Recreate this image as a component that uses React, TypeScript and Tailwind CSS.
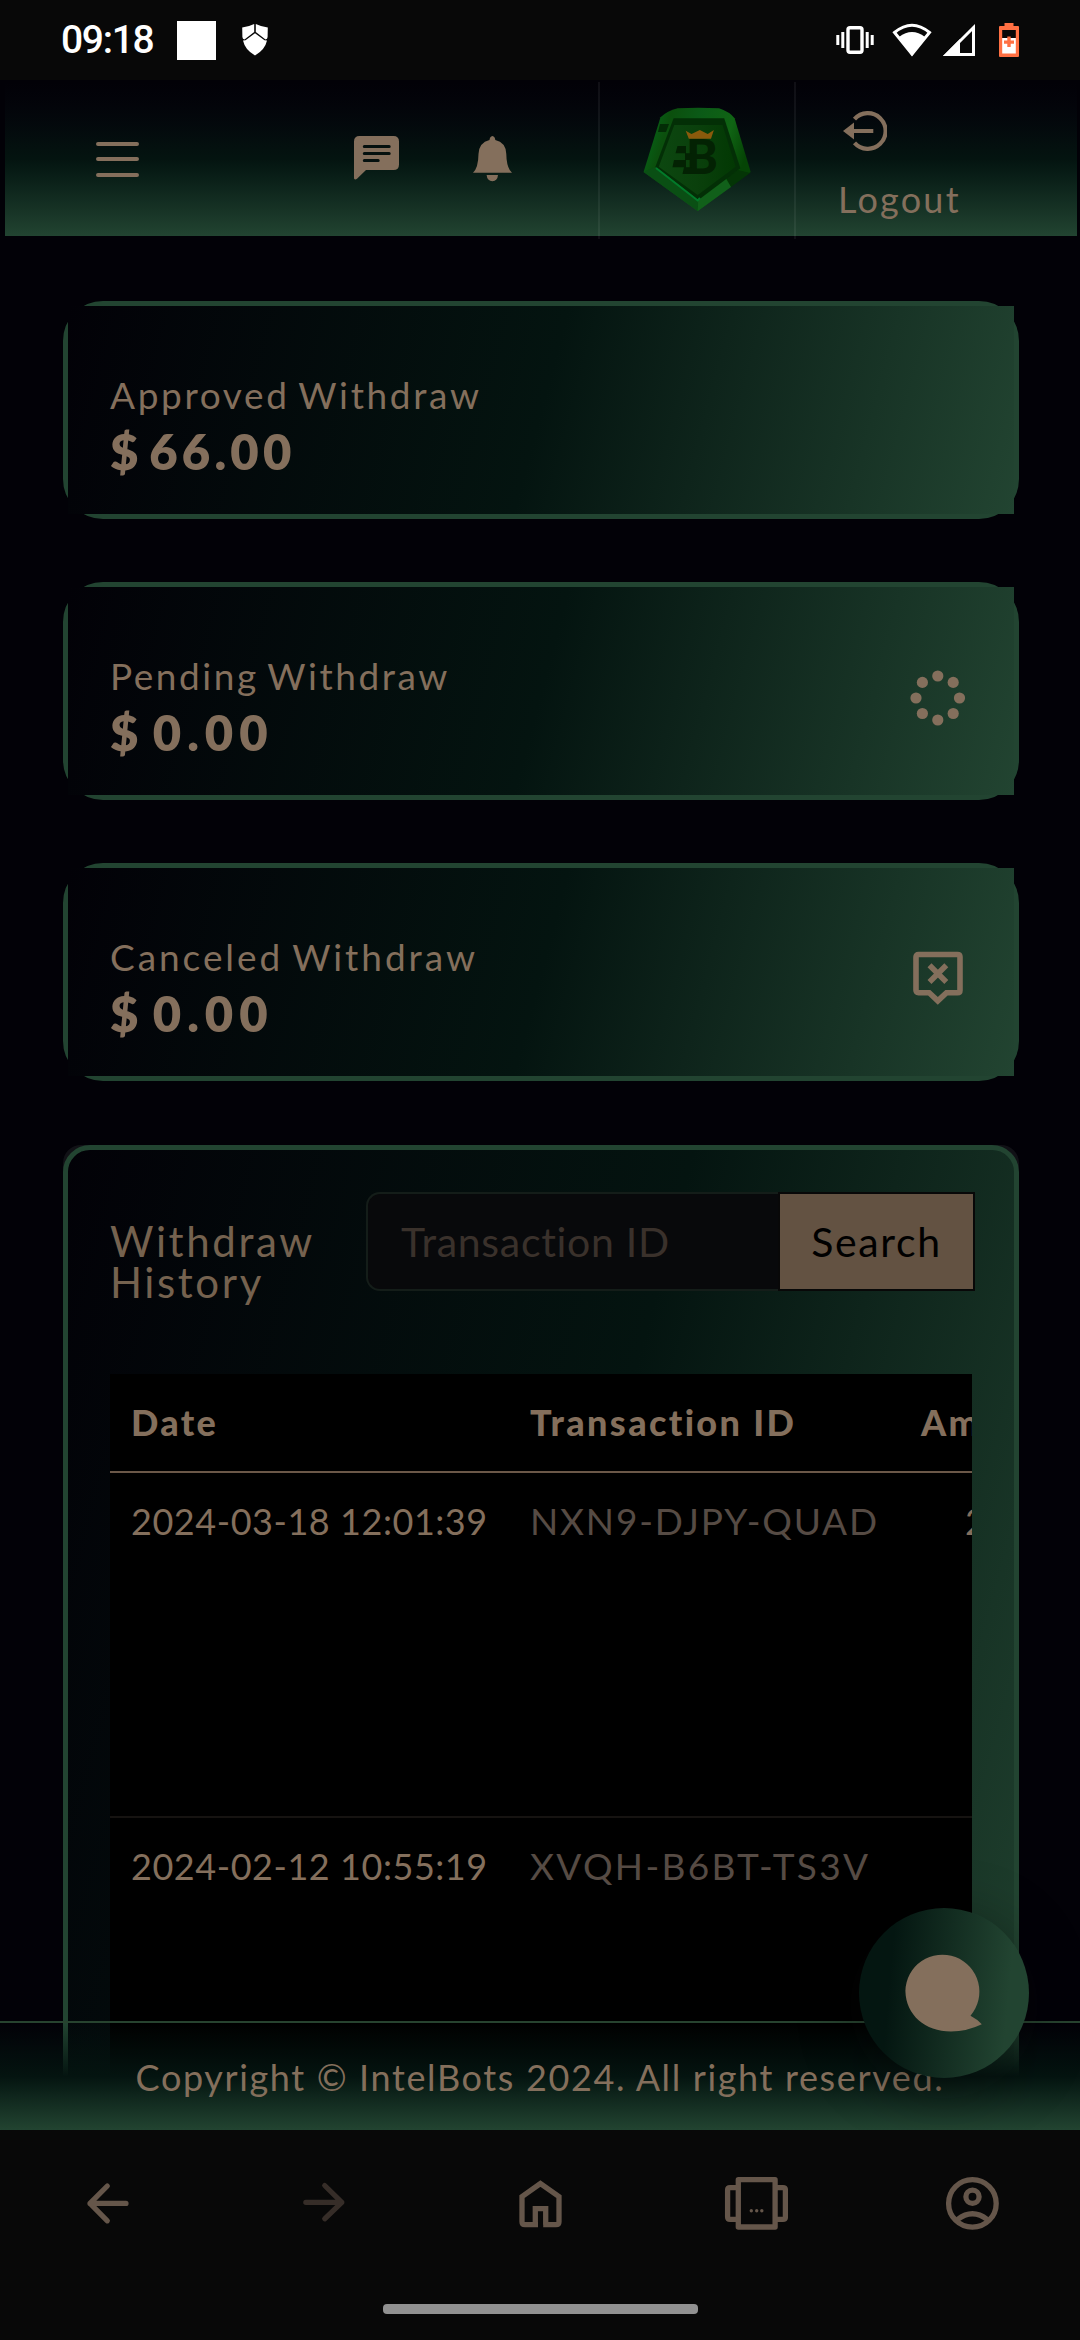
import type { ReactNode } from 'react';

const StatusBar = () => (
  <div className="flex h-[80px] items-center justify-between bg-[#080808] pr-[61px] pl-[61px] text-white">
    <div className="flex items-center">
      <span className="font-[Roboto,sans-serif] text-[39px] leading-[80px] font-medium tracking-[-1.300px]">09:18</span>
      <div className="ml-[24px] h-[39px] w-[39px] bg-white"></div>
      <svg className="ml-[26px] h-[32px] w-[26px]" viewBox="0 0 26 32" fill="currentColor">
        <path d="M12.200 0v8L2.500 15.500Q.5 15.200.4 13L.2 3.500Q7 2.600 12.200 0Z" />
        <path d="M13.800 0v8l9.700 7.500q2-.3 2.100-2.500l.2-9.500Q19 2.600 13.800 0Z" />
        <path d="M13 9.200 22.500 16.200l2.500.4Q23 26 13 31.500 3 26 1 16.600l2.500-.4Z" />
      </svg>
    </div>
    <div className="flex h-[34px] items-center">
      <svg className="h-[28px] w-[38px]" viewBox="0 0 38 28" fill="none" stroke="currentColor">
        <rect x="12" y="1.700" width="14" height="24.600" rx="2" strokeWidth="3.400" />
        <path d="M1.800 9v10M36.200 9v10M6.800 6v16M31.200 6v16" strokeWidth="3" />
      </svg>
      <svg className="ml-[18px] h-[34px] w-[40px]" viewBox="0 0 40 34">
        <path d="M2.500 9.500Q20-5 37.500 9.500L20 31Z" fill="none" stroke="currentColor" strokeWidth="3" />
        <path d="M7 14Q20 4 33 14L20 33Z" fill="currentColor" />
      </svg>
      <svg className="ml-[10px] h-[34px] w-[34px]" viewBox="0 0 34 34">
        <path d="M4.500 31.500 31.500 4.500V31.500Z" fill="none" stroke="currentColor" strokeWidth="3" />
        <path d="M1 33 18 16V33Z" fill="currentColor" />
      </svg>
      <svg className="ml-[23px] h-[34px] w-[20px]" viewBox="0 0 20 34">
        <path d="M5.500 0h9v3H19q1 0 1 1v29q0 1-1 1H1q-1 0-1-1V4q0-1 1-1h4.500Z" fill="#ff7043" />
        <path d="M3.200 7h13.600v8H3.200Z" fill="#080808" />
        <path d="M3.200 15h13.600v15.500H3.200Z" fill="#fff" />
        <path d="M8.300 13.500h3.400v4h3.300v3.300h-3.300V24H8.300v-3.200H5v-3.300h3.300Z" fill="#ff7043" />
      </svg>
    </div>
  </div>
);

const Logo = () => (
  <svg className="h-[110px] w-[114px]" viewBox="0 0 114 110">
    <defs>
      <linearGradient id="gem" x1="0" y1="0" x2="1" y2="0.3">
        <stop offset="0" stopColor="#02701f" />
        <stop offset="0.25" stopColor="#0b4f0d" />
        <stop offset="0.5" stopColor="#0b5a17" />
        <stop offset="0.8" stopColor="#106414" />
        <stop offset="1" stopColor="#054405" />
      </linearGradient>
      <linearGradient id="gem-face" x1="0" y1="0" x2="1" y2="0">
        <stop offset="0" stopColor="#0c4710" />
        <stop offset="0.5" stopColor="#0a400c" />
        <stop offset="1" stopColor="#023803" />
      </linearGradient>
    </defs>
    <path d="M37.700 4.300Q58 3 79 4.300Q90 8 94.600 14.300L110.700 68 57.700 107 3.600 68 20.500 13.300Q27 7 37.700 4.300Z" fill="url(#gem)" />
    <path d="M20 20h9l-3 8h-8Z" fill="#032c06" />
    <path d="M98 66 110 69 91 83 86 74Z" fill="#043506" />
    <path d="M3.600 68 15.400 62.700 58.400 96 57.700 107Z" fill="#0a4f14" />
    <path d="M57.700 107 58.400 96 86 75 91 83Z" fill="#11601a" />
    <path d="M33.600 14.300H84.200L100.400 64.300 58.400 96 15.400 62.700Z" fill="#032f06" />
    <path d="M16 64 57.700 96.500 60 94" fill="none" stroke="#027a2a" strokeWidth="2" />
    <path d="M34.300 21H82.500L95.600 62.700 57.700 91 18.800 62.700Z" fill="url(#gem-face)" />
    <path d="M45.700 26.700 51.500 30 59.800 26 67.700 30 73.900 26 71 34.700H48.800Z" fill="#8a5a0c" />
    <text x="46" y="70" className="font-[Lato,sans-serif] font-black" fontSize="48" fill="#032203">B</text>
    <path d="M37.500 42H46V49.300H35.500ZM45 49.300H52V56H45ZM34 56H46V63.300H32.500ZM44 63.300H52V70H42.500Z" fill="#032203" />
  </svg>
);

const Header = () => (
  <header className="mt-[2px] ml-[5px] flex h-[154px] w-[1072px] bg-linear-to-b from-[#020107] via-[#041410] to-[#224431] text-[#846f5c]">
    <div className="flex h-[157px] w-[595px] border-r-2 border-white/6">
      <svg className="mt-[60px] ml-[91px] h-[36px] w-[43px]" viewBox="0 0 43 36" stroke="currentColor" strokeWidth="4" strokeLinecap="round">
        <path d="M2 2H41M2 17H41M2 33H41" />
      </svg>
      <svg className="mt-[54px] ml-[215px] h-[45px] w-[45px]" viewBox="0 0 45 45">
        <path d="M5.500 0H39.500Q45 0 45 5.500V28.500Q45 34 39.500 34H12L3 42.800Q1 44.500 0 42.500V5.500Q0 0 5.500 0Z" fill="currentColor" />
        <path d="M10.300 10.400H35.200M10.300 17.400H35.200M10.300 24.400H24.200" stroke="#04100e" strokeWidth="3" strokeLinecap="round" />
      </svg>
      <svg className="mt-[54px] ml-[73px] h-[46px] w-[40px]" viewBox="0 0 40 46" fill="currentColor">
        <path d="M20.400 0Q23 .5 23.300 4 34 6.500 34.300 18 34.500 32 40 36.700H1Q6.300 32 6.500 18 7 6.500 17.500 4 17.800.5 20.400 0ZM14.600 39H26Q25.500 45 20.400 45.200 15.200 45 14.600 39Z" />
      </svg>
    </div>
    <div className="flex h-[157px] w-[196px] border-r-2 border-white/6 pt-[22px] pl-[40px]">
      <Logo />
    </div>
    <div className="flex flex-col pt-[29px] pl-[42px]">
      <svg className="ml-[5px] h-[40px] w-[44px]" viewBox="0 0 44 40">
        <path d="M11.500 8.200A17.800 17.800 0 1 1 11.500 31.800M10 20H30.300" fill="none" stroke="currentColor" strokeWidth="4.200" />
        <path d="M0 20 11 11.500V28.500Z" fill="currentColor" />
      </svg>
      <span className="mt-[28px] text-[36px] leading-[40px] tracking-[2.250px]">Logout</span>
    </div>
  </header>
);

const SpinnerIcon = () => (
  <svg className="h-[56px] w-[56px]" viewBox="0 0 56 56" fill="currentColor">
    <circle cx="27.800" cy="6" r="5.600" />
    <circle cx="43.200" cy="12.400" r="5.600" />
    <circle cx="49.500" cy="28" r="5.600" />
    <circle cx="43.200" cy="43.500" r="5.600" />
    <circle cx="27.800" cy="50" r="5.600" />
    <circle cx="12.400" cy="43.500" r="5.600" />
    <circle cx="6" cy="28" r="5.600" />
    <circle cx="12.400" cy="12.400" r="5.600" />
  </svg>
);

const CanceledIcon = () => (
  <svg className="h-[56px] w-[56px]" viewBox="0 0 56 56" fill="none" stroke="currentColor" strokeWidth="5.600">
    <path d="M8.500 3.500H47.500Q50 3.500 50 6V39.200Q50 41.700 47.500 41.700H36.500L27.800 49.800 19.200 41.700H8.500Q6 41.700 6 39.200V6Q6 3.500 8.500 3.500Z" />
    <path d="M19.500 14.300 36.300 31M36.300 14.300 19.500 31" />
  </svg>
);

interface SummaryCardProps {
  label: string;
  labelClass: string;
  amount: string;
  amountClass: string;
  icon?: ReactNode;
}

const SummaryCard = ({ label, labelClass, amount, amountClass, icon }: SummaryCardProps) => (
  <div className="h-[218px] w-[956px] rounded-[40px] border-5 border-[#224431]">
    <div className="flex h-full justify-between bg-[linear-gradient(105deg,#020107,#041410_50%,#224431)] pr-[48px] pl-[42px] text-[#846f5c]">
      <div className="pt-[67px]">
        <div className={`text-[37px] leading-[44px] whitespace-nowrap [word-spacing:-3px] ${labelClass}`}>{label}</div>
        <div className={`mt-[4px] text-[49px] leading-[60px] font-extrabold whitespace-nowrap [word-spacing:-9px] ${amountClass}`}>{amount}</div>
      </div>
      <div className="pt-[83px]">{icon}</div>
    </div>
  </div>
);

const rows = [
  { date: '2024-03-18 12:01:39', id: 'NXN9-DJPY-QUAD', idClass: 'tracking-[1.800px]', amount: '20' },
  { date: '2024-02-12 10:55:19', id: 'XVQH-B6BT-TS3V', idClass: 'tracking-[2.300px]', amount: '8' },
];

const HistoryPanel = () => (
  <section className="h-[1150px] w-[956px] shrink-0 rounded-[18px] bg-[#111116]">
    <div className="h-full rounded-[27px] border-5 border-[#224431] bg-[linear-gradient(105deg,#020107,#041410_50%,#224431)] bg-origin-border pt-[42px] pl-[42px]">
      <div className="flex h-[182px] items-start">
        <h2 className="mt-[29px] w-[256px] text-[42px] leading-[40.500px] tracking-[2.600px] text-[#75624f]">
          Withdraw
          <br />
          History
        </h2>
        <div className="flex h-[99px] w-[412px] items-center rounded-l-[14px] border-2 border-r-0 border-[#141d19] bg-[#08090b] pl-[33px] text-[41px] tracking-[0.700px] text-[#3a312b]">
          Transaction ID
        </div>
        <button className="h-[99px] w-[197px] border-2 border-[#080808] bg-[#635242] text-[41px] tracking-[1.600px] text-black">Search</button>
      </div>
      <div className="h-[900px] w-[862px] overflow-hidden bg-black text-[36px] text-[#846f5c]">
        <div className="grid w-[963px] grid-cols-[399px_390px_174px] border-b-2 border-[#6b5848] leading-[97px] font-black tracking-[2.350px]">
          <div className="pl-[21px]">Date</div>
          <div className="pl-[21px]">Transaction ID</div>
          <div className="pl-[22px]">Amount</div>
        </div>
        {rows.map((row) => (
          <div key={row.id} className="grid h-[345px] w-[963px] grid-cols-[399px_390px_174px] border-b-2 border-[#161311] pt-[26px] leading-[44px] whitespace-nowrap">
            <div className="pl-[21px] tracking-[0.550px]">{row.date}</div>
            <div className={`pl-[21px] text-[37px] text-[#564b44] ${row.idClass}`}>{row.id}</div>
            <div className="text-center">{row.amount}</div>
          </div>
        ))}
      </div>
    </div>
  </section>
);

const ChatButton = () => (
  <button className="absolute top-[1828px] left-[859px] h-[170px] w-[170px] rounded-full bg-[linear-gradient(95deg,#041611_20%,#224431_85%)] text-[#846f5c] shadow-[0_12px_60px_rgba(8,8,8,0.4)]">
    <svg className="h-[170px] w-[170px]" viewBox="0 0 170 170" fill="currentColor">
      <path d="M111.500 107.700A37 37 0 1 0 46.400 83C47 107 66 123.500 92 123.500Q108 123.500 122.800 116.300Q118 111 111.500 107.700Z" />
    </svg>
  </button>
);

const BottomNav = () => (
  <nav className="flex h-[210px] flex-col items-center bg-[#080808]">
    <div className="grid h-[174px] w-full grid-cols-5 justify-items-center pt-[42px] text-[#65564a]">
      <svg className="h-[64px] w-[64px]" viewBox="0 0 64 64" fill="none" stroke="currentColor" strokeWidth="5.200" strokeLinecap="round" strokeLinejoin="round">
        <path d="M31.300 14 14 31.400 31.300 48.800M14 31.400H50" />
      </svg>
      <svg className="h-[64px] w-[64px] text-[#362d28]" viewBox="0 0 64 64" fill="none" stroke="currentColor" strokeWidth="5.200" strokeLinecap="round" strokeLinejoin="round">
        <path d="M32.700 13.500 49.800 30.300 32.700 46.800M13.800 30.300H49.800" />
      </svg>
      <svg className="h-[64px] w-[64px]" viewBox="0 0 64 64" fill="none" stroke="currentColor" strokeWidth="5.300">
        <path d="M30 52.700H17Q14 52.700 14 49.700V24.700L32.400 11.500 51 24.700V49.700Q51 52.700 48 52.700H35.200M27.300 52.700V36.700H37.700V52.700" />
      </svg>
      <svg className="h-[64px] w-[64px]" viewBox="0 0 64 64" fill="none" stroke="currentColor" strokeWidth="5.300" strokeLinejoin="round">
        <path d="M14.300 7.700H51.100V55H14.300ZM14.300 15.700H6Q3.600 15.700 3.600 18V45Q3.600 47.300 6 47.300H14.300M51.100 15.700H59Q61.400 15.700 61.400 18V45Q61.400 47.300 59 47.300H51.100" />
        <g fill="currentColor" stroke="none">
          <circle cx="27.300" cy="38.700" r="1.700" />
          <circle cx="32.700" cy="38.700" r="1.700" />
          <circle cx="37.800" cy="38.700" r="1.700" />
        </g>
      </svg>
      <svg className="h-[64px] w-[64px]" viewBox="0 0 64 64" fill="none" stroke="currentColor" strokeWidth="5.300">
        <circle cx="32.400" cy="31.400" r="23.800" />
        <circle cx="32.500" cy="24.700" r="6.600" />
        <path d="M17.500 47.500Q32.400 36 47.300 47.500" />
      </svg>
    </div>
    <div className="h-[10px] w-[315px] rounded-[4px] bg-[#919191]"></div>
  </nav>
);

export default function App() {
  return (
    <div className="h-[2340px] w-[1080px] overflow-hidden bg-[#020107] font-[Lato,sans-serif]">
      <StatusBar />
      <div className="relative h-[2050px] overflow-hidden">
        <Header />
        <main className="flex flex-col px-[63px] pt-[65px]">
          <div className="mb-[64px] flex flex-col gap-[63px]">
            <SummaryCard label="Approved Withdraw" labelClass="tracking-[2.650px]" amount="$ 66.00" amountClass="tracking-[4.200px]" />
            <SummaryCard label="Pending Withdraw" labelClass="tracking-[2.550px]" amount="$ 0.00" amountClass="tracking-[6px]" icon={<SpinnerIcon />} />
            <SummaryCard label="Canceled Withdraw" labelClass="tracking-[2.950px]" amount="$ 0.00" amountClass="tracking-[6px]" icon={<CanceledIcon />} />
          </div>
          <HistoryPanel />
        </main>
        <footer className="absolute bottom-0 left-0 h-[109px] w-full border-t-2 border-[#27432f] bg-[linear-gradient(180deg,#02010700,#041410_50%,#224431)] pt-[32px] text-center text-[36px] leading-[44px] tracking-[1.630px] whitespace-nowrap text-[#846f5c]">
          Copyright © IntelBots 2024. All right reserved.
        </footer>
        <ChatButton />
      </div>
      <BottomNav />
    </div>
  );
}
